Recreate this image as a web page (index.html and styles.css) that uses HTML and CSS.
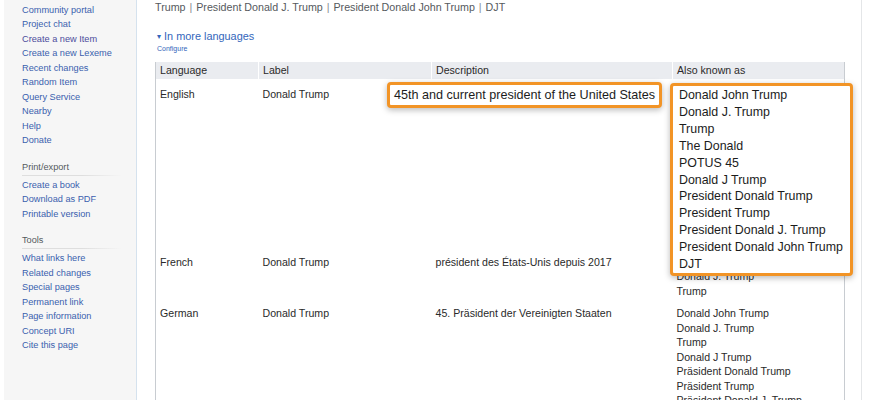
FILE: index.html
```html
<!DOCTYPE html>
<html>
<head>
<meta charset="utf-8">
<link rel="stylesheet" href="styles.css">
</head>
<body>
<div class="page">
  <nav class="sidebar">
    <ul class="nav-list nav-first">
      <li><a>Main page</a></li>
      <li><a>Community portal</a></li>
      <li><a>Project chat</a></li>
      <li><a class="visited">Create a new Item</a></li>
      <li><a>Create a new Lexeme</a></li>
      <li><a>Recent changes</a></li>
      <li><a>Random Item</a></li>
      <li><a>Query Service</a></li>
      <li><a>Nearby</a></li>
      <li><a>Help</a></li>
      <li><a>Donate</a></li>
    </ul>
    <div class="portal">
      <h3 class="portal-title">Print/export</h3>
      <ul class="nav-list">
        <li><a>Create a book</a></li>
        <li><a>Download as PDF</a></li>
        <li><a>Printable version</a></li>
      </ul>
    </div>
    <div class="portal">
      <h3 class="portal-title">Tools</h3>
      <ul class="nav-list">
        <li><a>What links here</a></li>
        <li><a>Related changes</a></li>
        <li><a>Special pages</a></li>
        <li><a>Permanent link</a></li>
        <li><a>Page information</a></li>
        <li><a>Concept URI</a></li>
        <li><a>Cite this page</a></li>
      </ul>
    </div>
  </nav>
  <main class="content">
    <div class="aliases-line">Trump <span class="sep">|</span> President Donald J. Trump <span class="sep">|</span> President Donald John Trump <span class="sep">|</span> DJT</div>
    <div class="more-lang"><span class="tri">▾</span> In more languages</div>
    <div class="configure">Configure</div>
    <div class="table-wrap">
      <table class="terms">
        <thead>
          <tr>
            <th class="c-lang">Language</th>
            <th class="c-label">Label</th>
            <th class="c-desc">Description</th>
            <th class="c-aka">Also known as</th>
          </tr>
        </thead>
        <tbody>
          <tr>
            <td>English</td>
            <td>Donald Trump</td>
            <td>45th and current president of the United States</td>
            <td>
              <div>Donald John Trump</div><div>Donald J. Trump</div><div>Trump</div><div>The Donald</div><div>POTUS 45</div><div>Donald J Trump</div><div>President Donald Trump</div><div>President Trump</div><div>President Donald J. Trump</div><div>President Donald John Trump</div><div>DJT</div>
            </td>
          </tr>
          <tr>
            <td>French</td>
            <td>Donald Trump</td>
            <td>président des États-Unis depuis 2017</td>
            <td><div>Donald John Trump</div><div>Donald J. Trump</div><div>Trump</div></td>
          </tr>
          <tr>
            <td>German</td>
            <td>Donald Trump</td>
            <td>45. Präsident der Vereinigten Staaten</td>
            <td><div>Donald John Trump</div><div>Donald J. Trump</div><div>Trump</div><div>Donald J Trump</div><div>Präsident Donald Trump</div><div>Präsident Trump</div><div>Präsident Donald J. Trump</div></td>
          </tr>
        </tbody>
      </table>
      <div class="hl hl-desc">45th and current president of the United States</div>
      <div class="hl hl-aka">
        <div>Donald John Trump</div><div>Donald J. Trump</div><div>Trump</div><div>The Donald</div><div>POTUS 45</div><div>Donald J Trump</div><div>President Donald Trump</div><div>President Trump</div><div>President Donald J. Trump</div><div>President Donald John Trump</div><div>DJT</div>
      </div>
    </div>
  </main>
</div>
</body>
</html>
```
FILE: styles.css
```css
html, body {
  margin: 0;
  padding: 0;
  background: #ffffff;
  font-family: "Liberation Sans", Arial, sans-serif;
  color: #222222;
  overflow: hidden;
}
.page {
  display: flex;
  height: 400px;
  padding-left: 4px;
  padding-right: 8px;
}
.sidebar {
  width: 132px;
  flex: none;
  background: #f6f6f6;
  border-right: 1px solid #d5e2ee;
  font-size: 9.2px;
}
.nav-list {
  list-style: none;
  margin: 0;
  padding: 0 0 0 18px;
}
.nav-first {
  margin-top: -12px;
}
.nav-list li {
  line-height: 14.5px;
  height: 14.5px;
}
.nav-list a {
  color: #3a5fae;
  white-space: nowrap;
}
.nav-list a.visited {
  color: #4b4b9c;
}
.portal {
  margin-top: 13px;
}
.portal-title {
  margin: 0 0 2px 18px;
  padding-bottom: 2px;
  font-size: 9.2px;
  font-weight: normal;
  color: #555a5e;
  line-height: 13px;
  width: 100px;
  background-image: linear-gradient(to right, #dedede 60%, rgba(222,222,222,0));
  background-size: 100% 1px;
  background-repeat: no-repeat;
  background-position: bottom left;
}
.portal + .portal {
  margin-top: 13px;
}
.content {
  flex: 1;
  position: relative;
  border-right: 1px solid #e4e6e8;
  padding: 0 16px 0 18px;
  font-size: 10.6px;
}
.aliases-line {
  color: #55595d;
  font-size: 10.7px;
  line-height: 14px;
  white-space: nowrap;
}
.sep {
  color: #8a8d90;
  padding: 0 1px;
}
.more-lang {
  margin-top: 15px;
  margin-left: 2px;
  color: #3366bb;
  font-size: 10.9px;
  line-height: 14px;
}
.tri {
  font-size: 8px;
  vertical-align: 1px;
}
.configure {
  margin-left: 2px;
  color: #3366bb;
  font-size: 7px;
  line-height: 10px;
}
.table-wrap {
  position: relative;
  margin-top: 8px;
}
.terms {
  width: 100%;
  border-collapse: collapse;
  border-left: 1px solid #c8ccd1;
  border-right: 1px solid #c8ccd1;
  font-size: 10.6px;
  table-layout: fixed;
}
.terms th {
  background: #eaecf0;
  font-weight: normal;
  text-align: left;
  line-height: 17px;
  padding: 0 5px 0 4px;
  border-left: 1px solid #ffffff;
  color: #2a2a2a;
}
.terms th:first-child { border-left: none; }
.c-lang { width: 93px; }
.c-label { width: 163px; }
.c-desc { width: 231px; }
.terms td {
  vertical-align: top;
  padding: 8px 5px 0 4px;
  line-height: 14.5px;
  color: #2a2a2a;
  white-space: nowrap;
}
.hl {
  position: absolute;
  background: #ffffff;
  border: 3px solid #f29426;
  border-radius: 4px;
  box-shadow: 0 2px 6px rgba(0,0,0,0.28);
  color: #1c1c1c;
  white-space: nowrap;
  box-sizing: border-box;
}
.hl-desc {
  left: 232px;
  top: 20px;
  width: 275px;
  height: 26px;
  line-height: 20px;
  padding-left: 4px;
  font-size: 12.6px;
}
.hl-aka {
  left: 515px;
  top: 21px;
  width: 183px;
  height: 193px;
  line-height: 16.9px;
  padding: 1px 0 0 6px;
  font-size: 12.4px;
}
```
